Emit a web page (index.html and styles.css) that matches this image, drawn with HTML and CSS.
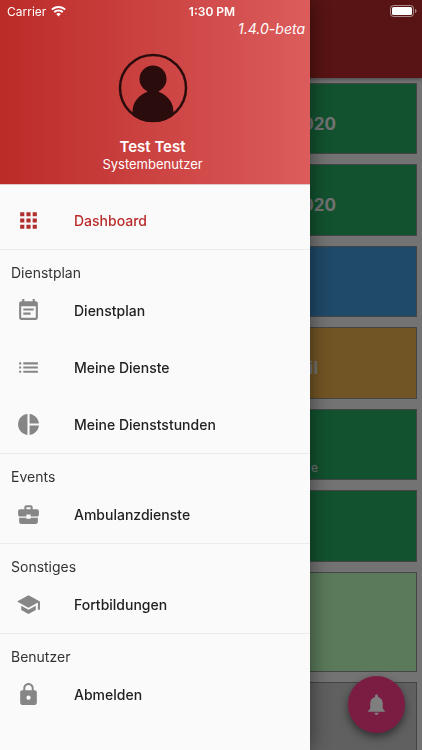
FILE: index.html
```html
<!DOCTYPE html>
<html lang="de">
<head>
    <meta charset="utf-8">
    <meta name="viewport" content="width=device-width, initial-scale=1">
    <title>Dashboard</title>
    <link rel="stylesheet" href="styles.css">
</head>
<body>
    <div class="page">
        <header class="toolbar"></header>
        <main class="cards">
            <div class="card green"><div class="title date">020</div></div>
            <div class="card green"><div class="title date">020</div></div>
            <div class="card blue"></div>
            <div class="card orange"><div class="title">il</div></div>
            <div class="card green"><div class="title">&nbsp;</div><div class="subtitle">e</div></div>
            <div class="card green"></div>
            <div class="card light tall"></div>
            <div class="card grey tall"></div>
        </main>
        <button class="fab" type="button" aria-label="Benachrichtigungen">
            <svg viewBox="0 0 24 24"><path d="M12 22c1.1 0 2-.9 2-2h-4c0 1.1.89 2 2 2zm6-6v-5c0-3.07-1.64-5.64-4.5-6.32V4c0-.83-.67-1.5-1.5-1.5s-1.5.67-1.5 1.5v.68C7.63 5.36 6 7.92 6 11v5l-2 2v1h16v-1l-2-2z"/></svg>
        </button>
    </div>

    <div class="scrim"></div>

    <aside class="drawer">
        <div class="profile">
            <div class="version">1.4.0-beta</div>
            <svg class="avatar" viewBox="0 0 70 70">
                <clipPath id="round"><circle cx="35" cy="35" r="34"/></clipPath>
                <circle cx="35" cy="35" r="33" fill="none" stroke="#2b0c0d" stroke-width="2.500"/>
                <g clip-path="url(#round)" fill="#2b0c0d">
                    <circle cx="35" cy="26" r="13.500"/>
                    <path d="M30 36h10l1 3c8 3 14.500 10 14.500 20v11h-41V59c0-10 6.500-17 14.500-20z"/>
                </g>
            </svg>
            <div class="name">Test Test</div>
            <div class="role">Systembenutzer</div>
        </div>
        <nav class="menu">
            <a class="item active" href="#dashboard">
                <svg viewBox="0 0 24 24"><path d="M4 8h4V4H4v4zm6 12h4v-4h-4v4zm-6 0h4v-4H4v4zm0-6h4v-4H4v4zm6 0h4v-4h-4v4zm6-10v4h4V4h-4zm-6 4h4V4h-4v4zm6 6h4v-4h-4v4zm0 6h4v-4h-4v4z"/></svg>
                Dashboard
            </a>
            <section class="group">
                <h2>Dienstplan</h2>
                <a class="item" href="#dienstplan">
                    <svg viewBox="0 0 24 24"><path d="M17 10H7v2h10v-2zm2-7h-1V1h-2v2H8V1H6v2H5c-1.11 0-1.99.9-1.99 2L3 19c0 1.1.89 2 2 2h14c1.1 0 2-.9 2-2V5c0-1.1-.9-2-2-2zm0 16H5V8h14v11zm-5-5H7v2h7v-2z"/></svg>
                    Dienstplan
                </a>
                <a class="item" href="#dienste">
                    <svg viewBox="0 0 24 24"><path d="M3 13h2v-2H3v2zm0 4h2v-2H3v2zm0-8h2V7H3v2zm4 4h14v-2H7v2zm0 4h14v-2H7v2zM7 7v2h14V7H7z"/></svg>
                    Meine Dienste
                </a>
                <a class="item" href="#dienststunden">
                    <svg viewBox="0 0 24 24"><path d="M11 2v20c-5.07-.5-9-4.79-9-10s3.93-9.5 9-10zm2.03 0v8.99H22c-.47-4.74-4.24-8.52-8.97-8.99zm0 11.01V22c4.74-.47 8.5-4.25 8.97-8.99h-8.97z"/></svg>
                    Meine Dienststunden
                </a>
            </section>
            <section class="group">
                <h2>Events</h2>
                <a class="item" href="#ambulanzdienste">
                    <svg viewBox="0 0 24 24"><path d="M10 16v-1H3.01L3 19c0 1.11.89 2 2 2h14c1.11 0 2-.89 2-2v-4h-7v1h-4zm10-9h-4V5c0-1.100-.9-2-2-2h-4c-1.100 0-2 .9-2 2v2H4c-1.1 0-2 .9-2 2v3c0 1.11.89 2 2 2h6v-2h4v2h6c1.1 0 2-.9 2-2V9c0-1.1-.9-2-2-2zm-6 0h-4V5h4v2z"/></svg>
                    Ambulanzdienste
                </a>
            </section>
            <section class="group">
                <h2>Sonstiges</h2>
                <a class="item" href="#fortbildungen">
                    <svg viewBox="0 0 24 24"><path d="M5 13.18v4L12 21l7-3.82v-4L12 17l-7-3.82zM12 3L1 9l11 6 9-4.91V17h2V9L12 3z"/></svg>
                    Fortbildungen
                </a>
            </section>
            <section class="group">
                <h2>Benutzer</h2>
                <a class="item" href="#abmelden">
                    <svg viewBox="0 0 24 24"><path d="M18 8h-1V6c0-2.76-2.24-5-5-5S7 3.24 7 6v2H6c-1.1 0-2 .9-2 2v10c0 1.1.9 2 2 2h12c1.1 0 2-.9 2-2V10c0-1.1-.9-2-2-2zm-6 9c-1.1 0-2-.9-2-2s.9-2 2-2 2 .9 2 2-.9 2-2 2zm3.1-9H8.9V6c0-1.71 1.39-3.1 3.1-3.1 1.71 0 3.1 1.39 3.1 3.1v2z"/></svg>
                    Abmelden
                </a>
            </section>
        </nav>
    </aside>

    <div class="statusbar">
        <div class="carrier">
            Carrier
            <svg class="wifi" viewBox="0 0 15 11"><path d="M7.5 0C4.700 0 2.100 1 .2 2.900l1.300 1.400C3.100 2.800 5.200 1.900 7.500 1.900s4.400.9 6 2.400l1.300-1.400C12.900 1 10.300 0 7.500 0zm0 3.600c-1.900 0-3.500.7-4.800 1.900L4 6.900c.9-.9 2.200-1.400 3.500-1.400s2.600.5 3.500 1.400l1.300-1.400c-1.300-1.200-2.900-1.900-4.800-1.900zm0 3.500c-.9 0-1.700.3-2.300.9L7.500 10.500 9.800 8c-.6-.6-1.400-.9-2.300-.9z"/></svg>
        </div>
        <div class="time">1:30 PM</div>
        <svg class="battery" viewBox="0 0 27 12">
            <rect x=".5" y=".5" width="23" height="11" rx="3" fill="none" stroke="#fff" stroke-opacity=".5"/>
            <rect x="2" y="2" width="20" height="8" rx="1.500" fill="#fff"/>
            <path d="M25 4v4c1-.3 1.500-1 1.500-2S26 4.300 25 4z" fill="#fff" fill-opacity=".5"/>
        </svg>
    </div>
</body>
</html>
```

FILE: styles.css
```css
* {
    box-sizing: border-box;
}

body {
    margin: 0;
    background: #e6e6e6;
    color: #212121;
    font-family: Inter, "Noto Sans", sans-serif;
    font-size: 15px;
}

.page {
    height: 100vh;
    overflow: hidden;
}

.toolbar {
    height: 78px;
    background: #b02828;
    box-shadow: 0 1px 4px rgba(0, 0, 0, .4);
}

.cards {
    display: flex;
    flex-direction: column;
    gap: 10px;
    padding: 5px;
}

.card {
    flex: none;
    height: 71px;
    padding: 29px 98px 0 0;
    border: 1px solid #8a8a8a;
    color: #e6e6e6;
    text-align: right;
}

.card:nth-child(even) {
    height: 72px;
}

.card.tall {
    height: 100px;
}

.green { background: #24a45e; }
.blue { background: #3e94d2; }
.orange { background: #e4aa48; }
.light { background: #b6f4b6; }
.grey { background: #c0c0c0; }

.title {
    font-size: 17px;
    line-height: 22px;
    font-weight: 700;
}

.title.date {
    margin-right: -18px;
}

.subtitle {
    font-size: 12px;
    line-height: 14px;
}

.fab {
    position: fixed;
    right: 17px;
    bottom: 17px;
    display: flex;
    align-items: center;
    justify-content: center;
    width: 57px;
    height: 57px;
    padding: 0;
    border: none;
    border-radius: 50%;
    background: #f63a86;
    box-shadow: 0 4px 8px rgba(0, 0, 0, .5);
}

.fab svg {
    width: 25px;
    fill: #fff;
}

.scrim {
    position: fixed;
    inset: 0;
    background: rgba(0, 0, 0, .5);
}

.drawer {
    position: fixed;
    top: 0;
    bottom: 0;
    left: 0;
    width: 310px;
    overflow: hidden;
    background: #fafafa;
    box-shadow: 0 0 20px rgba(0, 0, 0, .5);
}

.profile {
    display: flex;
    flex-direction: column;
    align-items: center;
    height: 185px;
    padding: 20px 5px 0 0;
    border-bottom: 1px solid #e0c8c8;
    background: linear-gradient(to right, #bb2b28, #dc5c5c);
    color: #fff;
}

.version {
    align-self: flex-end;
    font-size: 14px;
    font-style: italic;
    font-weight: 400;
    line-height: 18px;
}

.avatar {
    width: 70px;
    height: 70px;
    margin: 15px 0 14px;
}

.name {
    font-weight: 600;
    line-height: 20px;
}

.role {
    font-size: 13px;
    line-height: 14px;
}

.menu {
    padding-top: 7px;
}

.item {
    display: flex;
    align-items: center;
    gap: 33px;
    height: 57px;
    padding: 0 16px;
    color: #212121;
    font-size: 14px;
    font-weight: 500;
    text-decoration: none;
}

.item svg {
    width: 25px;
    height: 25px;
    fill: #868686;
}

.item.active {
    color: #b92b2b;
}

.item.active svg {
    fill: #b02e2e;
}

.group {
    border-top: 1px solid #ececec;
}

.group h2 {
    height: 32px;
    margin: 0;
    padding: 14px 11px 0;
    color: #333;
    font-size: 14px;
    line-height: 18px;
    font-weight: 400;
}

.statusbar {
    position: fixed;
    top: 0;
    left: 0;
    right: 0;
    display: grid;
    grid-template-columns: 1fr auto 1fr;
    align-items: center;
    height: 22px;
    padding: 0 5px 0 7px;
    color: #fff;
    font-size: 12px;
}

.carrier {
    display: flex;
    align-items: center;
    gap: 5px;
}

.wifi {
    width: 15px;
    height: 11px;
    fill: #fff;
}

.time {
    font-weight: 600;
}

.battery {
    justify-self: end;
    width: 27px;
    height: 12px;
}
```
